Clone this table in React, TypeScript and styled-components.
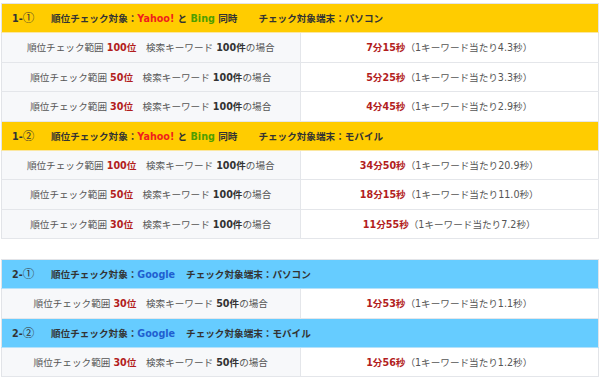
import { FC } from "react";
import styled, { createGlobalStyle } from "styled-components";

type Row = { range: string; count: string; time: string; per: string };
type Section = {
  no: string;
  engine: "yahoo" | "google";
  device: string;
  rows: Row[];
};

const table1: Section[] = [
  {
    no: "1-①",
    engine: "yahoo",
    device: "パソコン",
    rows: [
      { range: "100位", count: "100件", time: "7分15秒", per: "4.3秒" },
      { range: "50位", count: "100件", time: "5分25秒", per: "3.3秒" },
      { range: "30位", count: "100件", time: "4分45秒", per: "2.9秒" },
    ],
  },
  {
    no: "1-②",
    engine: "yahoo",
    device: "モバイル",
    rows: [
      { range: "100位", count: "100件", time: "34分50秒", per: "20.9秒" },
      { range: "50位", count: "100件", time: "18分15秒", per: "11.0秒" },
      { range: "30位", count: "100件", time: "11分55秒", per: "7.2秒" },
    ],
  },
];

const table2: Section[] = [
  {
    no: "2-①",
    engine: "google",
    device: "パソコン",
    rows: [{ range: "30位", count: "50件", time: "1分53秒", per: "1.1秒" }],
  },
  {
    no: "2-②",
    engine: "google",
    device: "モバイル",
    rows: [{ range: "30位", count: "50件", time: "1分56秒", per: "1.2秒" }],
  },
];

const GlobalStyle = createGlobalStyle`
  body {
    margin: 0;
    background: #fff;
    font-family: "DejaVu Sans", "Noto Sans CJK JP", sans-serif;
    font-size: 9.6px;
    color: #555;
  }
`;

const SectionHeader: FC<{ section: Section; tone: "yellow" | "blue" }> = ({
  section,
  tone,
}) => {
  const [num, circled] = [section.no.slice(0, 2), section.no.slice(2)];
  return (
    <tr>
      <HeadCell colSpan={2} $tone={tone}>
        <HeadNo>
          {num}
          <Circled>{circled}</Circled>
        </HeadNo>
        順位チェック対象：
        {section.engine === "yahoo" ? (
          <>
            <Engine $color="#f01d1d">Yahoo!</Engine> と{" "}
            <Engine $color="#4f9e00">Bing</Engine> 同時
          </>
        ) : (
          <Engine $color="#1f5fd0">Google</Engine>
        )}
        <DeviceLabel $gap={section.engine === "yahoo" ? 21 : 11}>
          チェック対象端末：{section.device}
        </DeviceLabel>
      </HeadCell>
    </tr>
  );
};

const SectionRows: FC<{ section: Section; tone: "yellow" | "blue" }> = ({
  section,
  tone,
}) => (
  <>
    <SectionHeader section={section} tone={tone} />
    {section.rows.map((row) => (
      <tr key={row.time}>
        <CondCell>
          順位チェック範囲 <Red>{row.range}</Red>　検索キーワード{" "}
          <Strong>{row.count}</Strong>の場合
        </CondCell>
        <TimeCell>
          <Red>{row.time}</Red>（1キーワード当たり{row.per}）
        </TimeCell>
      </tr>
    ))}
  </>
);

const PriceTable: FC<{ sections: Section[]; tone: "yellow" | "blue" }> = ({
  sections,
  tone,
}) => (
  <Table>
    <tbody>
      {sections.map((section) => (
        <SectionRows key={section.no} section={section} tone={tone} />
      ))}
    </tbody>
  </Table>
);

export default function App() {
  return (
    <>
      <GlobalStyle />
      <Page>
        <PriceTable sections={table1} tone="yellow" />
        <PriceTable sections={table2} tone="blue" />
      </Page>
    </>
  );
}

const Page = styled.div`
  display: flex;
  flex-direction: column;
  gap: 20px;
  padding: 3px 0 0 1px;
  width: 598px;
`;

const Table = styled.table`
  width: 598px;
  border-collapse: collapse;
  border: 1px solid #e2e4e8;
  table-layout: fixed;
`;

const HeadCell = styled.td<{ $tone: "yellow" | "blue" }>`
  height: 28px;
  padding: 0 0 0 10px;
  background: ${({ $tone }) => ($tone === "yellow" ? "#ffcc00" : "#66ccff")};
  border-bottom: 1px solid ${({ $tone }) =>
    $tone === "yellow" ? "#fbe7a0" : "#b5e2fb"};
  color: #333;
  font-weight: bold;
  text-align: left;
  white-space: nowrap;
`;

const HeadNo = styled.span`
  display: inline-block;
  width: 39px;
`;

const Circled = styled.span`
  font-family: "Noto Sans CJK JP", sans-serif;
  font-size: 11.5px;
  font-weight: normal;
  line-height: 1;
`;

const Engine = styled.span<{ $color: string }>`
  color: ${({ $color }) => $color};
`;

const DeviceLabel = styled.span<{ $gap: number }>`
  margin-left: ${({ $gap }) => $gap}px;
`;

const CondCell = styled.td`
  width: 309px;
  height: 28.5px;
  padding: 0;
  background: #f7f8fa;
  border-right: 1px solid #e4e6ea;
  border-bottom: 1px solid #e4e6ea;
  text-align: center;
  white-space: nowrap;
`;

const TimeCell = styled.td`
  height: 28.5px;
  padding: 0;
  background: #fff;
  border-bottom: 1px solid #e4e6ea;
  text-align: center;
  white-space: nowrap;
`;

const Red = styled.strong`
  color: #b21d1d;
  font-weight: bold;
`;

const Strong = styled.strong`
  color: #333;
  font-weight: bold;
`;
